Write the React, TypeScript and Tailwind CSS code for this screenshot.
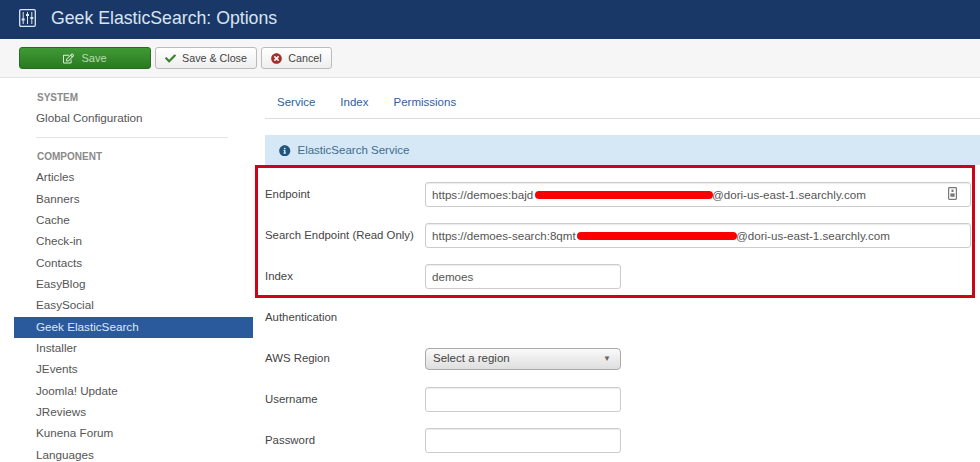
import { FaCheck, FaInfoCircle, FaRegEdit, FaTimesCircle } from 'react-icons/fa';

const sans = "font-['Liberation_Sans',Arial,sans-serif]";

const systemItems = ['Global Configuration'];
const componentItems = [
  'Articles', 'Banners', 'Cache', 'Check-in', 'Contacts', 'EasyBlog', 'EasySocial',
  'Geek ElasticSearch', 'Installer', 'JEvents', 'Joomla! Update', 'JReviews', 'Kunena Forum', 'Languages',
];

const SidebarItem = ({ label }: { label: string }) => (
  <div
    className={
      label === 'Geek ElasticSearch'
        ? 'h-[21.33px] pl-[22px] leading-[20px] text-[11.7px] bg-[#2a5a9b] text-[#dfe8f3]'
        : 'h-[21.33px] pl-[22px] leading-[20px] text-[11.7px] text-[#555]'
    }
  >
    {label}
  </div>
);

const Field = ({ label, children }: { label: string; children: React.ReactNode }) => (
  <div className="flex items-center h-[41px] text-[11.4px] text-[#444]">
    <div className="w-[160px] shrink-0">{label}</div>
    {children}
  </div>
);

const TextBox = ({ value, wide, children }: { value?: string; wide?: boolean; children?: React.ReactNode }) => (
  <div
    className={
      wide
        ? 'relative w-[546px] h-[25px] px-[6px] leading-[23px] bg-white border border-[#ccc] rounded-[3px] shadow-[inset_0_1px_1px_rgba(0,0,0,0.08)] text-[11.6px] text-[#555]'
        : 'relative w-[196px] h-[25px] px-[6px] leading-[23px] bg-white border border-[#ccc] rounded-[3px] shadow-[inset_0_1px_1px_rgba(0,0,0,0.08)] text-[11.6px] text-[#555]'
    }
  >
    {value}
    {children}
  </div>
);

export default function App() {
  return (
    <div className={`${sans} w-[980px] h-[462px] overflow-hidden bg-white relative`}>
      {/* title bar */}
      <div className="h-[39px] bg-[#1a3867] flex items-center pl-[19px] gap-[15px]">
        <svg width="17" height="18" viewBox="0 0 17 18" fill="none" stroke="#dfe6f0" strokeWidth="1.3" className="mb-[3px]">
          <rect x="0.7" y="0.7" width="15.6" height="16.6" rx="1.2" />
          <path d="M4.2 3v12M8.5 3v12M12.8 3v12" strokeWidth="1" />
          <path d="M2.7 10.5h3M7 6h3M11.3 9h3" strokeWidth="1.8" />
        </svg>
        <div className="text-[17.7px] text-[#dbe4f0] mb-[2px]">Geek ElasticSearch: Options</div>
      </div>

      {/* toolbar */}
      <div className="h-[39px] bg-[#f6f6f6] border-b border-[#e4e4e4] flex items-center pl-[19px] gap-[4px]">
        <button className="w-[132px] h-[22px] flex items-center justify-center gap-[7px] rounded-[3px] bg-gradient-to-b from-[#3f9a35] to-[#2a7a20] border border-[#2a6a22] text-[11px] text-[#b9dcb3]">
          <FaRegEdit className="text-[11px] text-[#e2f2df]" />
          Save
        </button>
        <button className="w-[102px] h-[22px] flex items-center justify-center gap-[6px] rounded-[3px] bg-gradient-to-b from-[#ffffff] to-[#eeeeee] border border-[#bbb] text-[10.7px] text-[#444]">
          <FaCheck className="text-[11px] text-[#3b8130]" />
          Save &amp; Close
        </button>
        <button className="w-[71px] h-[22px] flex items-center justify-center gap-[6px] rounded-[3px] bg-gradient-to-b from-[#ffffff] to-[#eeeeee] border border-[#bbb] text-[10.7px] text-[#444]">
          <FaTimesCircle className="text-[11px] text-[#a52f28]" />
          Cancel
        </button>
      </div>

      <div className="flex">
        {/* sidebar */}
        <div className="w-[239px] ml-[14px] shrink-0 pt-[12px]">
          <div className="h-[15px] pl-[23px] text-[10px] leading-[15px] font-bold text-[#8a8a8a]">SYSTEM</div>
          <div className="mt-[3px]">
            {systemItems.map((item) => (
              <SidebarItem key={item} label={item} />
            ))}
          </div>
          <div className="mt-[8px] ml-[22px] w-[192px] border-t border-[#e3e3e3]" />
          <div className="mt-[11px] h-[15px] pl-[23px] text-[10px] leading-[15px] font-bold text-[#8a8a8a]">COMPONENT</div>
          <div className="mt-[3px]">
            {componentItems.map((item) => (
              <SidebarItem key={item} label={item} />
            ))}
          </div>
        </div>

        {/* main column */}
        <div className="ml-[12px] flex-1 relative">
          <div className="h-[41px] border-b border-[#ddd] flex items-start pt-[17px] pl-[12px] gap-[25px] text-[11.5px] leading-[14px] text-[#2f6199]">
            <span>Service</span>
            <span>Index</span>
            <span>Permissions</span>
          </div>
          <div className="mt-[16px] h-[30px] pt-[1px] bg-[#d6e8f5] flex items-center pl-[14px] gap-[7px] text-[11.5px] text-[#3f6c8f]">
            <FaInfoCircle className="text-[11.5px] text-[#1f5480]" />
            ElasticSearch Service
          </div>

          <div className="mt-[9px]">
            <Field label="Endpoint">
              <TextBox wide value="https://demoes:bajd">
                <span className="absolute left-[109px] top-[8px] w-[178px] h-[8px] rounded-full bg-[#fa0000]" />
                <span className="absolute left-[286px] top-0 leading-[23px]">@dori-us-east-1.searchly.com</span>
                <svg className="absolute right-[13px] top-[4px]" width="9" height="13" viewBox="0 0 9 13" fill="none">
                  <rect x="0.6" y="0.6" width="7.8" height="11.8" rx="0.8" stroke="#777" strokeWidth="1.2" />
                  <rect x="3.5" y="2.6" width="2" height="2.4" fill="#777" />
                  <rect x="2.4" y="6.4" width="4.2" height="3.4" fill="#777" />
                </svg>
              </TextBox>
            </Field>
            <Field label="Search Endpoint (Read Only)">
              <TextBox wide value="https://demoes-search:8qmt">
                <span className="absolute left-[151px] top-[8px] w-[160px] h-[8px] rounded-full bg-[#fa0000]" />
                <span className="absolute left-[310px] top-0 leading-[23px]">@dori-us-east-1.searchly.com</span>
              </TextBox>
            </Field>
            <Field label="Index">
              <TextBox value="demoes" />
            </Field>
            <Field label="Authentication">
              <span />
            </Field>
            <Field label="AWS Region">
              <div className="w-[196px] h-[22px] px-[7px] flex items-center justify-between rounded-[4px] border border-[#aaa] bg-gradient-to-b from-[#fafafa] to-[#dedede] text-[11.5px] text-[#444]">
                Select a region
                <span className="text-[8px] text-[#666] pr-[2px]">▼</span>
              </div>
            </Field>
            <Field label="Username">
              <TextBox />
            </Field>
            <Field label="Password">
              <TextBox />
            </Field>
          </div>
        </div>
      </div>

      {/* annotation round the highlighted fields */}
      <div className="absolute left-[255px] top-[165px] w-[720px] h-[133px] border-[3px] border-[#d0021b] pointer-events-none" />
    </div>
  );
}
